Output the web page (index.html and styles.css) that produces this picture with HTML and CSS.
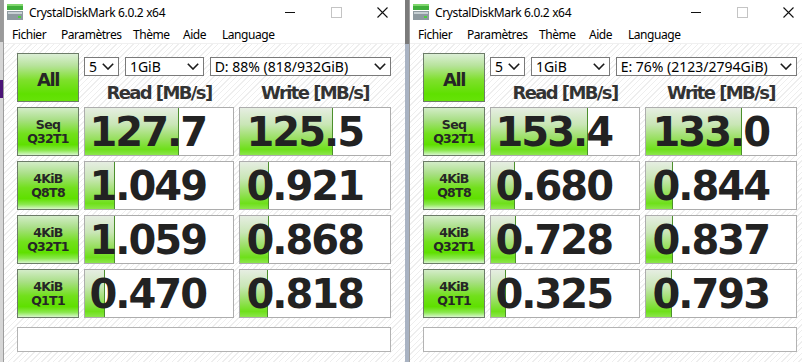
FILE: index.html
```html
<!DOCTYPE html>
<html lang="fr">
<head>
<meta charset="utf-8">
<title>CrystalDiskMark</title>
<link rel="stylesheet" href="styles.css">
</head>
<body>
<div class="desk">
  <div class="edge"></div>

  <div class="win">
    <div class="titlebar">
      <svg class="appicon" width="16" height="16" viewBox="0 0 16 16">
        <rect x="0" y="0" width="16" height="6" fill="#3fae3a"/>
        <rect x="0" y="0" width="16" height="2" fill="#7fd66d"/>
        <rect x="0" y="7" width="16" height="9" fill="#8e9aa0"/>
        <rect x="1" y="8" width="14" height="2" fill="#c7d0d4"/>
        <rect x="11" y="12" width="3" height="2" fill="#4cd040"/>
      </svg>
      <span class="title">CrystalDiskMark 6.0.2 x64</span>
      <div class="controls">
        <span class="ctl"><span class="min"></span></span>
        <span class="ctl"><span class="max"></span></span>
        <span class="ctl"><svg width="11" height="11" viewBox="0 0 11 11"><path d="M0.5 0.5 L10.5 10.5 M10.5 0.5 L0.5 10.5" stroke="#111" stroke-width="1.1" fill="none"/></svg></span>
      </div>
    </div>
    <div class="menubar">
      <span class="mi m1">Fichier</span>
      <span class="mi m2">Paramètres</span>
      <span class="mi m3">Thème</span>
      <span class="mi m4">Aide</span>
      <span class="mi">Language</span>
    </div>
    <div class="client">
      <div class="btn all">All</div>
      <div class="selects">
        <div class="sel s-count"><span>5</span><svg class="chev" width="12" height="7" viewBox="0 0 12 7"><path d="M0.8 0.8 L6 6 L11.2 0.8" stroke="#1a1a1a" stroke-width="1.6" fill="none"/></svg></div>
        <div class="sel s-size"><span>1GiB</span><svg class="chev" width="12" height="7" viewBox="0 0 12 7"><path d="M0.8 0.8 L6 6 L11.2 0.8" stroke="#1a1a1a" stroke-width="1.6" fill="none"/></svg></div>
        <div class="sel s-drive"><span>D: 88% (818/932GiB)</span><svg class="chev" width="12" height="7" viewBox="0 0 12 7"><path d="M0.8 0.8 L6 6 L11.2 0.8" stroke="#1a1a1a" stroke-width="1.6" fill="none"/></svg></div>
      </div>
      <div class="hdr">Read [MB/s]</div>
      <div class="hdr">Write [MB/s]</div>

      <div class="btn test">Seq<br>Q32T1</div>
      <div class="cell"><div class="bar" style="width:94px"></div><span class="val">127.7</span></div>
      <div class="cell"><div class="bar" style="width:93px"></div><span class="val">125.5</span></div>

      <div class="btn test">4KiB<br>Q8T8</div>
      <div class="cell"><div class="bar" style="width:30px"></div><span class="val">1.049</span></div>
      <div class="cell"><div class="bar" style="width:29px"></div><span class="val">0.921</span></div>

      <div class="btn test">4KiB<br>Q32T1</div>
      <div class="cell"><div class="bar" style="width:30px"></div><span class="val">1.059</span></div>
      <div class="cell"><div class="bar" style="width:29px"></div><span class="val">0.868</span></div>

      <div class="btn test">4KiB<br>Q1T1</div>
      <div class="cell"><div class="bar" style="width:20px"></div><span class="val">0.470</span></div>
      <div class="cell"><div class="bar" style="width:28px"></div><span class="val">0.818</span></div>

      <div class="status"></div>
    </div>
  </div>

  <div class="gap"></div>

  <div class="win">
    <div class="titlebar">
      <svg class="appicon" width="16" height="16" viewBox="0 0 16 16">
        <rect x="0" y="0" width="16" height="6" fill="#3fae3a"/>
        <rect x="0" y="0" width="16" height="2" fill="#7fd66d"/>
        <rect x="0" y="7" width="16" height="9" fill="#8e9aa0"/>
        <rect x="1" y="8" width="14" height="2" fill="#c7d0d4"/>
        <rect x="11" y="12" width="3" height="2" fill="#4cd040"/>
      </svg>
      <span class="title">CrystalDiskMark 6.0.2 x64</span>
      <div class="controls">
        <span class="ctl"><span class="min"></span></span>
        <span class="ctl"><span class="max"></span></span>
        <span class="ctl"><svg width="11" height="11" viewBox="0 0 11 11"><path d="M0.5 0.5 L10.5 10.5 M10.5 0.5 L0.5 10.5" stroke="#111" stroke-width="1.1" fill="none"/></svg></span>
      </div>
    </div>
    <div class="menubar">
      <span class="mi m1">Fichier</span>
      <span class="mi m2">Paramètres</span>
      <span class="mi m3">Thème</span>
      <span class="mi m4">Aide</span>
      <span class="mi">Language</span>
    </div>
    <div class="client">
      <div class="btn all">All</div>
      <div class="selects">
        <div class="sel s-count"><span>5</span><svg class="chev" width="12" height="7" viewBox="0 0 12 7"><path d="M0.8 0.8 L6 6 L11.2 0.8" stroke="#1a1a1a" stroke-width="1.6" fill="none"/></svg></div>
        <div class="sel s-size"><span>1GiB</span><svg class="chev" width="12" height="7" viewBox="0 0 12 7"><path d="M0.8 0.8 L6 6 L11.2 0.8" stroke="#1a1a1a" stroke-width="1.6" fill="none"/></svg></div>
        <div class="sel s-drive"><span>E: 76% (2123/2794GiB)</span><svg class="chev" width="12" height="7" viewBox="0 0 12 7"><path d="M0.8 0.8 L6 6 L11.2 0.8" stroke="#1a1a1a" stroke-width="1.6" fill="none"/></svg></div>
      </div>
      <div class="hdr">Read [MB/s]</div>
      <div class="hdr">Write [MB/s]</div>

      <div class="btn test">Seq<br>Q32T1</div>
      <div class="cell"><div class="bar" style="width:97px"></div><span class="val">153.4</span></div>
      <div class="cell"><div class="bar" style="width:96px"></div><span class="val">133.0</span></div>

      <div class="btn test">4KiB<br>Q8T8</div>
      <div class="cell"><div class="bar" style="width:24px"></div><span class="val">0.680</span></div>
      <div class="cell"><div class="bar" style="width:27px"></div><span class="val">0.844</span></div>

      <div class="btn test">4KiB<br>Q32T1</div>
      <div class="cell"><div class="bar" style="width:25px"></div><span class="val">0.728</span></div>
      <div class="cell"><div class="bar" style="width:27px"></div><span class="val">0.837</span></div>

      <div class="btn test">4KiB<br>Q1T1</div>
      <div class="cell"><div class="bar" style="width:15px"></div><span class="val">0.325</span></div>
      <div class="cell"><div class="bar" style="width:26px"></div><span class="val">0.793</span></div>

      <div class="status"></div>
    </div>
  </div>
</div>
</body>
</html>
```

FILE: styles.css
```css
html, body {
  margin: 0;
  padding: 0;
}
body {
  width: 802px;
  height: 362px;
  overflow: hidden;
  background: #a9b3c3;
  font-family: "Noto Sans", "DejaVu Sans", sans-serif;
}
.desk {
  display: flex;
  align-items: stretch;
  height: 362px;
  width: 820px;
}
.edge {
  flex: none;
  width: 3px;
  background: linear-gradient(to bottom,
    #9a9a9a 0, #9a9a9a 42px,
    #d6d6d6 42px, #d6d6d6 80px,
    #4b1477 80px, #4b1477 98px,
    #d6d6d6 98px, #d6d6d6 100%);
}
.gap {
  flex: none;
  width: 4px;
  background: linear-gradient(to bottom, #7a7a7a 0, #7a7a7a 44px, #a9b3c3 44px);
}
.win {
  flex: none;
  width: 401px;
  border-left: 1px solid #9d9d9d;
  background: #fff;
  display: flex;
  flex-direction: column;
}

/* title bar */
.titlebar {
  height: 25px;
  display: flex;
  align-items: center;
  padding-left: 3px;
  background: #fff;
}
.appicon {
  flex: none;
  margin-top: -1px;
}
.title {
  margin-left: 6px;
  font-size: 12px;
  letter-spacing: -0.35px;
  color: #000;
  white-space: nowrap;
}
.controls {
  margin-left: auto;
  display: flex;
  height: 25px;
}
.ctl {
  width: 46px;
  display: flex;
  align-items: center;
  justify-content: center;
}
.min {
  width: 10px;
  height: 1px;
  background: #111;
}
.max {
  width: 9px;
  height: 9px;
  border: 1px solid #c4c4c4;
}

/* menu */
.menubar {
  height: 18px;
  display: flex;
  align-items: center;
  padding-left: 8px;
  font-size: 12px;
  letter-spacing: -0.45px;
  color: #000;
  border-bottom: 1px solid #f0f0f0;
}
.mi {
  flex: none;
  white-space: nowrap;
}
.m1 { width: 49px; }
.m2 { width: 72px; }
.m3 { width: 50px; }
.m4 { width: 39px; }

/* client */
.client {
  flex: 1;
  display: grid;
  grid-template-columns: 62px 150px 152px;
  grid-template-rows: 23px 21px repeat(4, 49px) 29px;
  column-gap: 5px;
  row-gap: 5px;
  padding: 9px 0 0 13px;
  align-content: start;
  background: repeating-linear-gradient(135deg, #ffffff 0, #ffffff 3px, #eeeeee 3px, #eeeeee 4px);
}

.btn {
  box-sizing: border-box;
  border: 1px solid #6c7c68;
  background: linear-gradient(to bottom,
    #d3ecc8 0%, #a9df86 25%, #72e01c 55%, #5fe000 78%, #8ae84e 90%, #d8f6cc 100%);
  display: flex;
  align-items: center;
  justify-content: center;
  text-align: center;
  font-family: "DejaVu Sans", sans-serif;
  font-weight: bold;
  color: #262626;
}
.all {
  grid-row: 1 / 3;
  font-size: 18px;
  letter-spacing: -1.5px;
  padding-top: 4px;
  background: linear-gradient(to bottom,
    #dcefd6 0%, #b7e39b 25%, #7fe02c 55%, #5fe000 85%, #66e308 100%);
}
.test {
  font-size: 12.5px;
  line-height: 14px;
  letter-spacing: -0.7px;
}

.selects {
  grid-column: 2 / 4;
  display: flex;
  gap: 6px;
  align-self: end;
  height: 19px;
}
.sel {
  box-sizing: border-box;
  height: 19px;
  border: 1px solid #7a7a7a;
  background: #fff;
  display: flex;
  align-items: center;
  padding: 0 4px 0 4px;
  font-size: 14px;
  color: #000;
  white-space: nowrap;
}
.sel span {
  flex: 1;
  line-height: 17px;
}
.chev {
  flex: none;
  margin-left: 4px;
}
.s-count { width: 35px; }
.s-size { width: 79px; }
.s-drive { width: 182px; }

.hdr {
  display: flex;
  align-items: flex-end;
  justify-content: center;
  font-family: "DejaVu Sans", sans-serif;
  font-weight: bold;
  font-size: 18px;
  line-height: 18px;
  letter-spacing: -1.6px;
  color: #333;
  white-space: nowrap;
}

.cell {
  box-sizing: border-box;
  border: 1px solid #adadad;
  background: #fff;
  display: grid;
  overflow: hidden;
}
.bar {
  grid-area: 1 / 1;
  justify-self: start;
  height: 100%;
  box-sizing: border-box;
  border-right: 1px solid #4c8f2c;
  background: linear-gradient(to bottom,
    #e6eee2 0%, #c9e6b6 35%, #98e060 65%, #6ee01a 88%, #8ce64c 100%);
}
.val {
  grid-area: 1 / 1;
  justify-self: end;
  align-self: center;
  padding-right: 27px;
  font-family: "DejaVu Sans", sans-serif;
  font-weight: bold;
  font-size: 40px;
  line-height: 40px;
  letter-spacing: -2px;
  color: #222;
}

.status {
  grid-column: 1 / -1;
  margin-top: 4px;
  box-sizing: border-box;
  border: 1px solid #b3b3b3;
  background: #fff;
  width: 374px;
}
```
